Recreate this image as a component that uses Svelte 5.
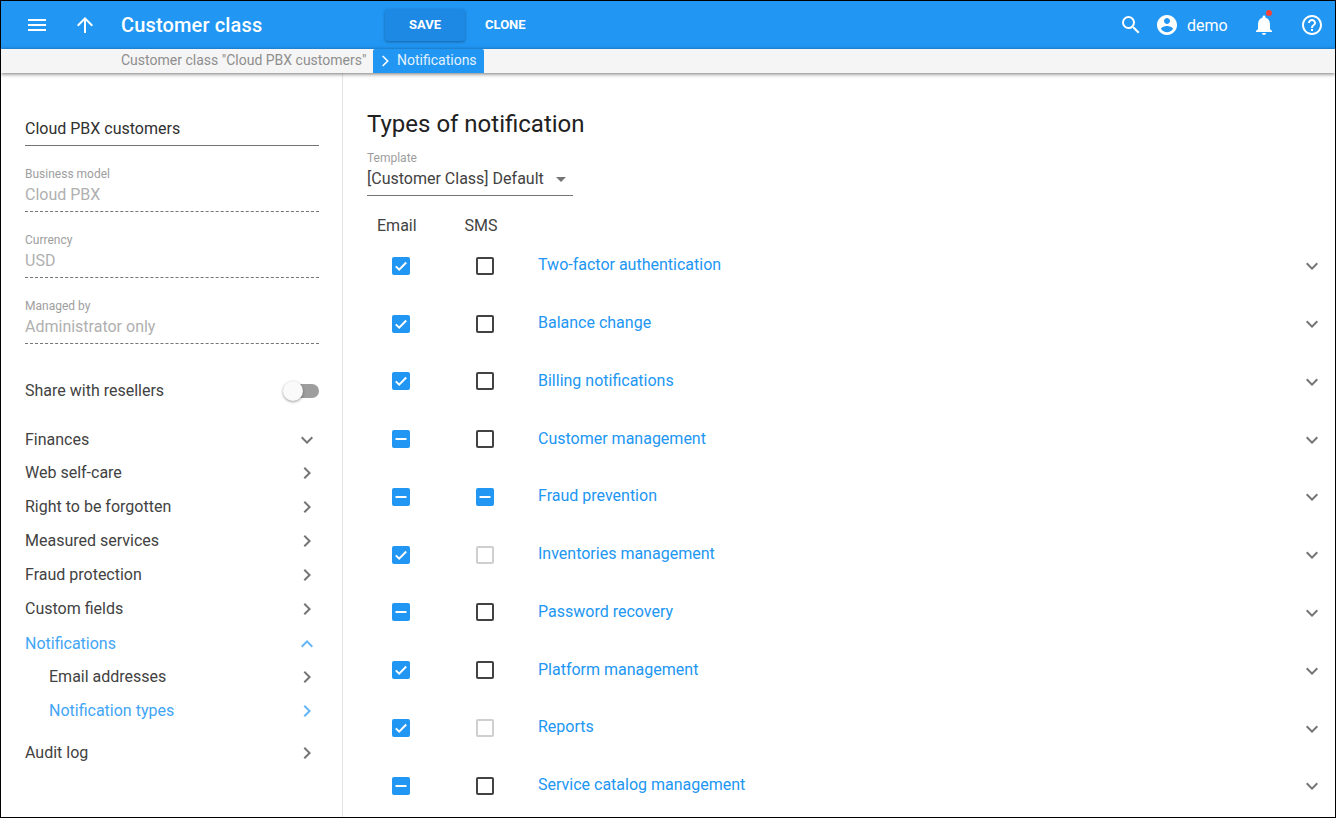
<script>
  const fields = [
    { label: 'Business model', value: 'Cloud PBX' },
    { label: 'Currency', value: 'USD' },
    { label: 'Managed by', value: 'Administrator only' }
  ];
  const nav = [
    { t: 'Finances', i: 'down', h: 33 },
    { t: 'Web self-care', i: 'right', h: 34 },
    { t: 'Right to be forgotten', i: 'right', h: 34 },
    { t: 'Measured services', i: 'right', h: 34 },
    { t: 'Fraud protection', i: 'right', h: 34 },
    { t: 'Custom fields', i: 'right', h: 35 },
    { t: 'Notifications', i: 'up', h: 33, active: true },
    { t: 'Email addresses', i: 'right', h: 34, sub: true },
    { t: 'Notification types', i: 'right', h: 42, sub: true, active: true },
    { t: 'Audit log', i: 'right', h: 34 }
  ];
  const rows = [
    ['Two-factor authentication', 'c', 'u'],
    ['Balance change', 'c', 'u'],
    ['Billing notifications', 'c', 'u'],
    ['Customer management', 'm', 'u'],
    ['Fraud prevention', 'm', 'm'],
    ['Inventories management', 'c', 'd'],
    ['Password recovery', 'm', 'u'],
    ['Platform management', 'c', 'u'],
    ['Reports', 'c', 'd'],
    ['Service catalog management', 'm', 'u']
  ];
  const chevrons = {
    right: 'M8.59 16.59L13.17 12 8.59 7.41 10 6l6 6-6 6z',
    down: 'M7.41 8.59L12 13.17l4.59-4.58L18 10l-6 6-6-6z',
    up: 'M7.41 15.41L12 10.83l4.59 4.58L18 14l-6-6-6 6z'
  };
</script>

{#snippet box(kind)}
  <span class="box {kind}">
    {#if kind === 'c'}
      <svg viewBox="0 0 18 18" width="18" height="18"><path d="M3.8 9.4l3.4 3.3 7-7.2" fill="none" stroke="#fff" stroke-width="2" /></svg>
    {:else if kind === 'm'}
      <svg viewBox="0 0 18 18" width="18" height="18"><path d="M3.5 9h11" fill="none" stroke="#fff" stroke-width="2" /></svg>
    {/if}
  </span>
{/snippet}

<div class="frame">
  <header class="top">
    <button class="icon menu" aria-label="Menu">
      <svg viewBox="0 0 24 24" width="24" height="24"><path d="M3 18h18v-2H3zm0-5h18v-2H3zm0-7v2h18V6z" fill="#fff" /></svg>
    </button>
    <button class="icon up" aria-label="Up">
      <svg viewBox="0 0 24 24" width="24" height="24"><path d="M4 12l1.41 1.41L11 7.83V20h2V7.83l5.58 5.59L20 12l-8-8z" fill="#fff" /></svg>
    </button>
    <h1>Customer class</h1>
    <button class="save">SAVE</button>
    <button class="clone">CLONE</button>
    <div class="right">
      <svg class="search" viewBox="0 0 24 24" width="24" height="24"><path d="M15.5 14h-.79l-.28-.27A6.47 6.47 0 0 0 16 9.5 6.5 6.5 0 1 0 9.5 16c1.61 0 3.09-.59 4.23-1.57l.27.28v.79l5 4.99L20.49 19l-4.99-5zm-6 0C7.01 14 5 11.99 5 9.5S7.01 5 9.5 5 14 7.01 14 9.5 11.99 14 9.5 14z" fill="#fff" /></svg>
      <svg class="user" viewBox="0 0 24 24" width="24" height="24"><path d="M12 2C6.48 2 2 6.48 2 12s4.48 10 10 10 10-4.48 10-10S17.52 2 12 2zm0 3c1.66 0 3 1.34 3 3s-1.34 3-3 3-3-1.34-3-3 1.34-3 3-3zm0 14.2c-2.5 0-4.71-1.28-6-3.22.03-1.99 4-3.08 6-3.08 1.99 0 5.97 1.09 6 3.08-1.29 1.94-3.5 3.22-6 3.22z" fill="#fff" /></svg>
      <span class="demo">demo</span>
      <span class="bell">
        <svg viewBox="0 0 24 24" width="24" height="24"><path d="M12 22c1.1 0 2-.9 2-2h-4c0 1.1.9 2 2 2zm6-6v-5c0-3.07-1.63-5.64-4.5-6.32V4c0-.83-.67-1.5-1.5-1.5s-1.5.67-1.5 1.5v.68C7.64 5.36 6 7.92 6 11v5l-2 2v1h16v-1l-2-2z" fill="#fff" /></svg>
        <i class="dot"></i>
      </span>
      <svg class="help" viewBox="0 0 24 24" width="24" height="24"><path d="M11 18h2v-2h-2v2zm1-16C6.48 2 2 6.48 2 12s4.48 10 10 10 10-4.48 10-10S17.52 2 12 2zm0 18c-4.41 0-8-3.59-8-8s3.59-8 8-8 8 3.59 8 8-3.59 8-8 8zm0-14c-2.21 0-4 1.79-4 4h2c0-1.1.9-2 2-2s2 .9 2 2c0 2-3 1.75-3 5h2c0-2.25 3-2.5 3-5 0-2.21-1.79-4-4-4z" fill="#fff" /></svg>
    </div>
  </header>

  <nav class="crumbs">
    <span class="crumb">Customer class "Cloud PBX customers"</span>
    <span class="current">
      <svg viewBox="0 0 24 24" width="16" height="16"><path d="M8.5 4.5l7.5 7.5-7.5 7.5" fill="none" stroke="#fff" stroke-width="2.4" /></svg>
      Notifications
    </span>
  </nav>

  <div class="body">
    <aside class="side">
      <div class="name">Cloud PBX customers</div>
      {#each fields as f}
        <div class="field">
          <span class="lbl">{f.label}</span>
          <span class="val">{f.value}</span>
        </div>
      {/each}
      <div class="share">
        <span>Share with resellers</span>
        <span class="switch"><i></i></span>
      </div>
      <ul class="nav">
        {#each nav as n}
          <li class:sub={n.sub} class:active={n.active} style="height:{n.h}px">
            <span>{n.t}</span>
            <svg viewBox="0 0 24 24" width="24" height="24"><path d={chevrons[n.i]} fill="currentColor" /></svg>
          </li>
        {/each}
      </ul>
    </aside>

    <main class="main">
      <h2>Types of notification</h2>
      <div class="select">
        <span class="lbl">Template</span>
        <div class="sel-val">
          <span>[Customer Class] Default</span>
          <i class="caret"></i>
        </div>
      </div>
      <div class="heads"><span class="h-email">Email</span><span class="h-sms">SMS</span></div>
      <div class="rows">
        {#each rows as r}
          <div class="row">
            <div class="cell">{@render box(r[1])}</div>
            <div class="cell">{@render box(r[2])}</div>
            <a class="link" href="#top">{r[0]}</a>
            <svg class="exp" viewBox="0 0 24 24" width="24" height="24"><path d={chevrons.down} fill="#757575" /></svg>
          </div>
        {/each}
      </div>
    </main>
  </div>
</div>

<style>
  :global(body) { margin: 0; background: #fff; }
  .frame {
    width: 1336px; height: 818px; box-sizing: border-box; border: 1px solid #000;
    overflow: hidden; display: flex; flex-direction: column;
    font-family: Roboto, "Liberation Sans", sans-serif; font-size: 16px; color: #424242;
  }
  button { border: 0; background: none; padding: 0; font-family: inherit; cursor: pointer; }
  .top { height: 48px; flex: none; background: #2196f3; display: flex; align-items: center; color: #fff; }
  .icon { width: 24px; height: 24px; display: block; }
  .menu { margin-left: 24px; }
  .up { margin-left: 24px; }
  h1 { margin: 0 0 0 24px; width: 264px; font-size: 20px; font-weight: 500; line-height: 48px; letter-spacing: .15px; }
  .save {
    width: 80px; height: 32px; border-radius: 3px; background: #1e88e5; color: #fff; padding-bottom: 2px;
    font-size: 13px; font-weight: 700; box-shadow: 0 1px 3px rgba(0,0,0,.35);
  }
  .clone { margin-left: 20px; color: #fff; font-size: 13px; font-weight: 700; padding-bottom: 2px; }
  .right { margin-left: auto; display: flex; align-items: center; }
  .search { margin-right: 12px; }
  .demo { margin-left: 8px; width: 42px; font-size: 16px; }
  .bell { position: relative; display: block; width: 24px; height: 24px; margin-left: 23px; }
  .bell svg { display: block; }
  .dot { position: absolute; top: -3px; left: 14px; width: 6px; height: 6px; border-radius: 50%; background: #f44336; }
  .help { margin-left: 24px; margin-right: 11px; }
  .crumbs {
    height: 24px; flex: none; background: #f5f5f5; display: flex; align-items: center; padding-left: 120px;
    font-size: 14px; box-shadow: 0 1px 4px rgba(0,0,0,.55); position: relative; z-index: 1; line-height: 22px;
  }
  .crumb { color: #8e8e8e; width: 252px; white-space: nowrap; padding-bottom: 2px; }
  .current {
    background: #2196f3; height: 24px; width: 111px; box-sizing: border-box; display: flex;
    align-items: center; gap: 4px; padding: 0 0 2px 4px; border-radius: 2px 2px 0 0; white-space: nowrap; color: #e3f2fd;
  }
  .current svg { margin-top: 2px; }
  .body { flex: 1; display: flex; min-height: 0; }
  .side {
    width: 342px; box-sizing: border-box; flex: none; border-right: 1px solid #e5e5e5; padding: 42px 23px 0 24px;
  }
  .name { height: 30px; line-height: 28px; color: #303030; border-bottom: 1px solid #757575; }
  .field { height: 66px; box-sizing: border-box; padding-top: 20px; border-bottom: 1px dashed #757575; display: flex; flex-direction: column; }
  .lbl { font-size: 12px; line-height: 16px; color: #9e9e9e; }
  .val { color: #b0b0b0; line-height: 24px; margin-top: 1px; }
  .share { display: flex; align-items: center; justify-content: space-between; margin-top: 34px; height: 24px; }
  .switch { height: 14px; position: relative; display: block; background: #9e9e9e; border-radius: 7px; width: 34px; margin-top: 2px; }
  .switch i {
    position: absolute; left: -2px; top: -3px; width: 20px; height: 20px; border-radius: 50%; background: #fafafa;
    box-shadow: 0 1px 3px rgba(0,0,0,.4);
  }
  .nav { list-style: none; margin: 25px 0 0; padding: 0; }
  .nav li { display: flex; justify-content: space-between; box-sizing: border-box; padding-top: 1px; line-height: 24px; }
  .nav li svg { color: #757575; }
  .nav li.sub { padding-left: 24px; }
  .nav li.active { color: #42a5f5; }
  .nav li.active svg { color: #64b5f6; }
  .main { flex: 1; padding: 0 10px 0 24px; min-width: 0; }
  h2 { margin: 35px 0 0; font-size: 24px; font-weight: 400; line-height: 32px; color: #212121; }
  .select { width: 206px; margin-top: 10px; border-bottom: 1px solid #757575; height: 46px; box-sizing: border-box; }
  .select .lbl { display: block; }
  .sel-val { display: flex; align-items: center; justify-content: space-between; line-height: 24px; color: #424242; margin-top: 1px; }
  .caret { border: 5px solid transparent; border-top-color: #757575; border-bottom-width: 0; margin-right: 7px; }
  .heads { margin-top: 18px; height: 24px; line-height: 24px; display: flex; padding-left: 10px; }
  .h-sms { margin-left: 48px; }
  .rows { margin-top: -1.57px; }
  .row { height: 57.78px; display: flex; align-items: center; }
  .cell { width: 84px; flex: none; display: flex; padding-left: 25px; box-sizing: border-box; margin-top: .9px; }
  .link { margin-left: 3px; color: #2196f3; text-decoration: none; line-height: 24px; }
  .exp { margin-left: auto; margin-top: 2.22px; margin-right: 1px; }
  .box {
    width: 18px; height: 18px; box-sizing: border-box; border-radius: 2px; display: block; position: relative;
    border: 2px solid #424242;
  }
  .box svg { position: absolute; left: -2px; top: -2px; display: block; }
  .box.c, .box.m { background: #2196f3; border-color: #2196f3; }
  .box.d { border-color: #cfcfcf; }
</style>
